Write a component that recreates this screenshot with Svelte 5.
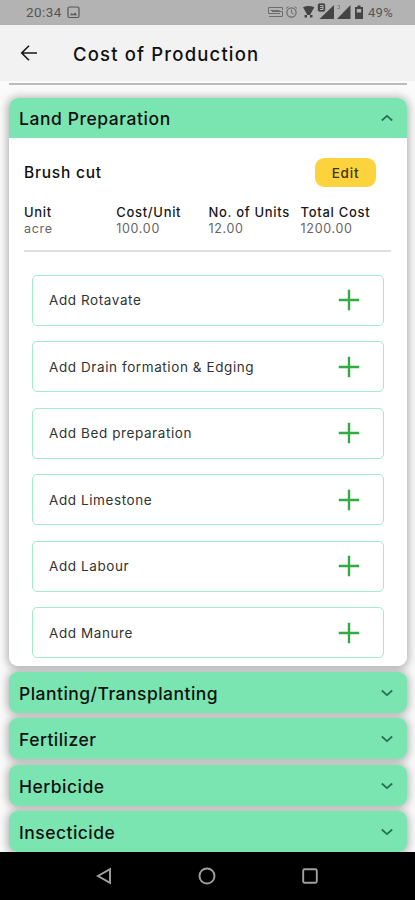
<script>
  const facts = [
    { label: 'Unit', value: 'acre' },
    { label: 'Cost/Unit', value: '100.00' },
    { label: 'No. of Units', value: '12.00' },
    { label: 'Total Cost', value: '1200.00' }
  ];
  const items = ['Rotavate', 'Drain formation & Edging', 'Bed preparation', 'Limestone', 'Labour', 'Manure'];
  const sections = ['Planting/Transplanting', 'Fertilizer', 'Herbicide', 'Insecticide'];
</script>

{#snippet chevron(up)}
  <svg class="chevron" class:up width="14" height="10" viewBox="0 0 14 10"><path d="M1.800 2.500 7 7.200l5.200-4.700" fill="none" stroke="#267052" stroke-width="1.7" /></svg>
{/snippet}

<div class="screen">
  <div class="status">
    <span class="time">20:34</span>
    <svg class="picture" width="13" height="13" viewBox="0 0 13 13" fill="none" stroke="#555" stroke-width="1.2"><rect x="1" y="1" width="11" height="10.5" rx="1.5" /><path d="M3 9.2 4.8 7l1.400 1.500L8 6.500l2.200 2.700Z" fill="#555" stroke="none" /></svg>
    <svg class="signals" width="98" height="18" viewBox="0 0 98 18">
      <g fill="none" stroke="#6c6c6c" stroke-width="1">
        <path d="M15.500 7V4.500h-14v6H13M2 13.500h13.500v-5H5M3.500 7.500h9" />
        <circle cx="24.500" cy="9.500" r="4.600" stroke-width="1.200" /><path d="M24.500 6.500v3.300l2 1.200M19 5.500l2.600-2M30 5.500l-2.600-2" />
      </g>
      <g fill="#444">
        <path d="M36 4.200q5.700-2.200 11.400 0L43 12h-2.600Z" />
        <path d="M37.500 12h2.500v2.500h-2.500zM43 12h2.500v2.500H43z" />
        <path d="M67 2v14H52.500Z" /><rect x="50.500" y="0" width="8" height="9" rx="2" stroke="#b3b3b3" stroke-width=".7" />
        <path d="M83.500 2v14H70Z" />
        <path d="M90.500 2.500h3V4H96v12h-8V4h2.500Z" />
      </g>
      <path d="M89.800 6h4.400v3.500h-4.400z" fill="#b3b3b3" />
      <path d="M53 2.500h3v4h-3M53 4.500h3" fill="none" stroke="#ccc" stroke-width=".8" />
      <path d="M70.500 2.500h2v3h-2" fill="none" stroke="#777" stroke-width=".8" />
    </svg>
    <span class="percent">49%</span>
  </div>

  <header>
    <svg width="18" height="18" viewBox="0 0 18 18" fill="none" stroke="#171717" stroke-width="1.6"><path d="M17 9H2M9 1.700 1.700 9 9 16.300" /></svg>
    <h1>Cost of Production</h1>
  </header>

  <main>
    <section class="panel open">
      <div class="bar"><h2>Land Preparation</h2>{@render chevron(true)}</div>
      <div class="body">
        <div class="entry"><h3>Brush cut</h3><button class="edit">Edit</button></div>
        <div class="facts">
          {#each facts as f}
            <div class="fact"><b>{f.label}</b><span>{f.value}</span></div>
          {/each}
        </div>
        <div class="items">
          {#each items as item}
            <div class="item"><span>Add {item}</span><svg width="22" height="22" viewBox="0 0 22 22"><path d="M11 .8v20.400M.8 11h20.400" stroke="#35a944" stroke-width="2.400" /></svg></div>
          {/each}
        </div>
      </div>
    </section>
    {#each sections as s}
      <section class="panel"><div class="bar"><h2>{s}</h2>{@render chevron(false)}</div></section>
    {/each}
  </main>

  <nav>
    <svg width="16" height="18" viewBox="0 0 16 18"><path d="M14 2.200v13.600L2 9Z" /></svg>
    <svg width="18" height="18" viewBox="0 0 18 18"><circle cx="9" cy="9" r="7.500" /></svg>
    <svg width="16" height="18" viewBox="0 0 16 18"><rect x="1.200" y="2.200" width="13.600" height="13.600" rx="1.500" /></svg>
  </nav>
</div>

<style>
  :global(body) { margin: 0; }
  .screen { width: 415px; height: 900px; display: flex; flex-direction: column; overflow: hidden; background: #fbfbfb; font-family: Inter, "Noto Sans", sans-serif; color: #111; }
  h1, h2, h3 { margin: 0; font-weight: 500; white-space: nowrap; }
  svg { display: block; flex: none; }
  .status { flex: none; height: 25px; box-sizing: border-box; padding: 0 0 1px 26px; display: flex; align-items: center; background: #b3b3b3; font-family: Roboto, sans-serif; font-size: 13.500px; color: #555; }
  .time { width: 37px; letter-spacing: .4px; white-space: nowrap; }
  .picture { margin-left: 4px; }
  .signals { margin-left: 187px; }
  .percent { margin-left: 3px; font-size: 13px; letter-spacing: .3px; }
  header { flex: none; height: 56px; display: flex; align-items: center; padding-left: 20px; box-sizing: border-box; background: #f2f2f2; }
  h1 { margin-left: 35px; font-size: 18.500px; letter-spacing: 1.160px; line-height: 24px; padding-top: 2px; }
  main { flex: none; height: 771px; box-sizing: border-box; overflow: hidden; padding: 2px 8px 0 9px; display: flex; flex-direction: column; gap: 6px; isolation: isolate; }
  main::before { content: ""; flex: none; height: 1.500px; background: #bcbcbc; margin-bottom: 7.500px; }
  .panel { flex: none; height: 40.400px; border-radius: 9px; background: #7ae5b0; position: relative; }
  .panel::before { content: ""; position: absolute; inset: 0; border-radius: 9px; z-index: -1; box-shadow: 0 1px 8px 2px #8585859c; }
  .panel.open { height: 568px; background: #fff; }
  .bar { height: 41px; box-sizing: border-box; display: flex; align-items: center; justify-content: space-between; padding: 1px 13px 0 10px; background: #7ae5b0; border-radius: 9px; }
  .open .bar { height: 40px; padding-top: 0; border-radius: 9px 9px 0 0; }
  h2 { font-size: 17.500px; letter-spacing: .47px; line-height: 22px; padding-top: 2px; }
  .open h2 { letter-spacing: .56px; }
  .chevron.up { transform: rotate(180deg); }
  .body { padding: 20px 15px 0; }
  .entry { height: 29px; display: flex; align-items: center; justify-content: space-between; padding-right: 16px; }
  h3 { font-size: 15.500px; letter-spacing: .780px; }
  .edit { width: 61px; height: 29px; border: 0; padding: 0; border-radius: 9px; background: #fdd33d; color: #3c3516; font: 500 13.500px Inter, sans-serif; letter-spacing: .8px; }
  .facts { display: flex; height: 65px; box-sizing: border-box; padding-top: 17px; margin-right: 1px; border-bottom: 2px solid #dedede; }
  .fact { width: 92.200px; display: flex; flex-direction: column; font-size: 12.500px; line-height: 17px; white-space: nowrap; flex: none; color: #666; letter-spacing: .7px; }
  .fact b { font-weight: 500; font-size: 13px; line-height: 16px; letter-spacing: .7px; color: #191919; }
  .items { padding: 22.500px 8px 0; display: flex; flex-direction: column; gap: 15.600px; }
  .item { height: 51px; box-sizing: border-box; border: 1.500px solid #a5eaca; border-radius: 5px; display: flex; align-items: center; justify-content: space-between; padding: 0 23px 0 16px; font-size: 13.500px; letter-spacing: .590px; color: #333; white-space: nowrap; }
  nav { flex: none; height: 48px; box-sizing: border-box; padding-right: 1px; background: #000; display: flex; align-items: center; justify-content: center; gap: 86px; }
  nav svg { fill: none; stroke: #a0a0a0; stroke-width: 1.900; }
</style>
